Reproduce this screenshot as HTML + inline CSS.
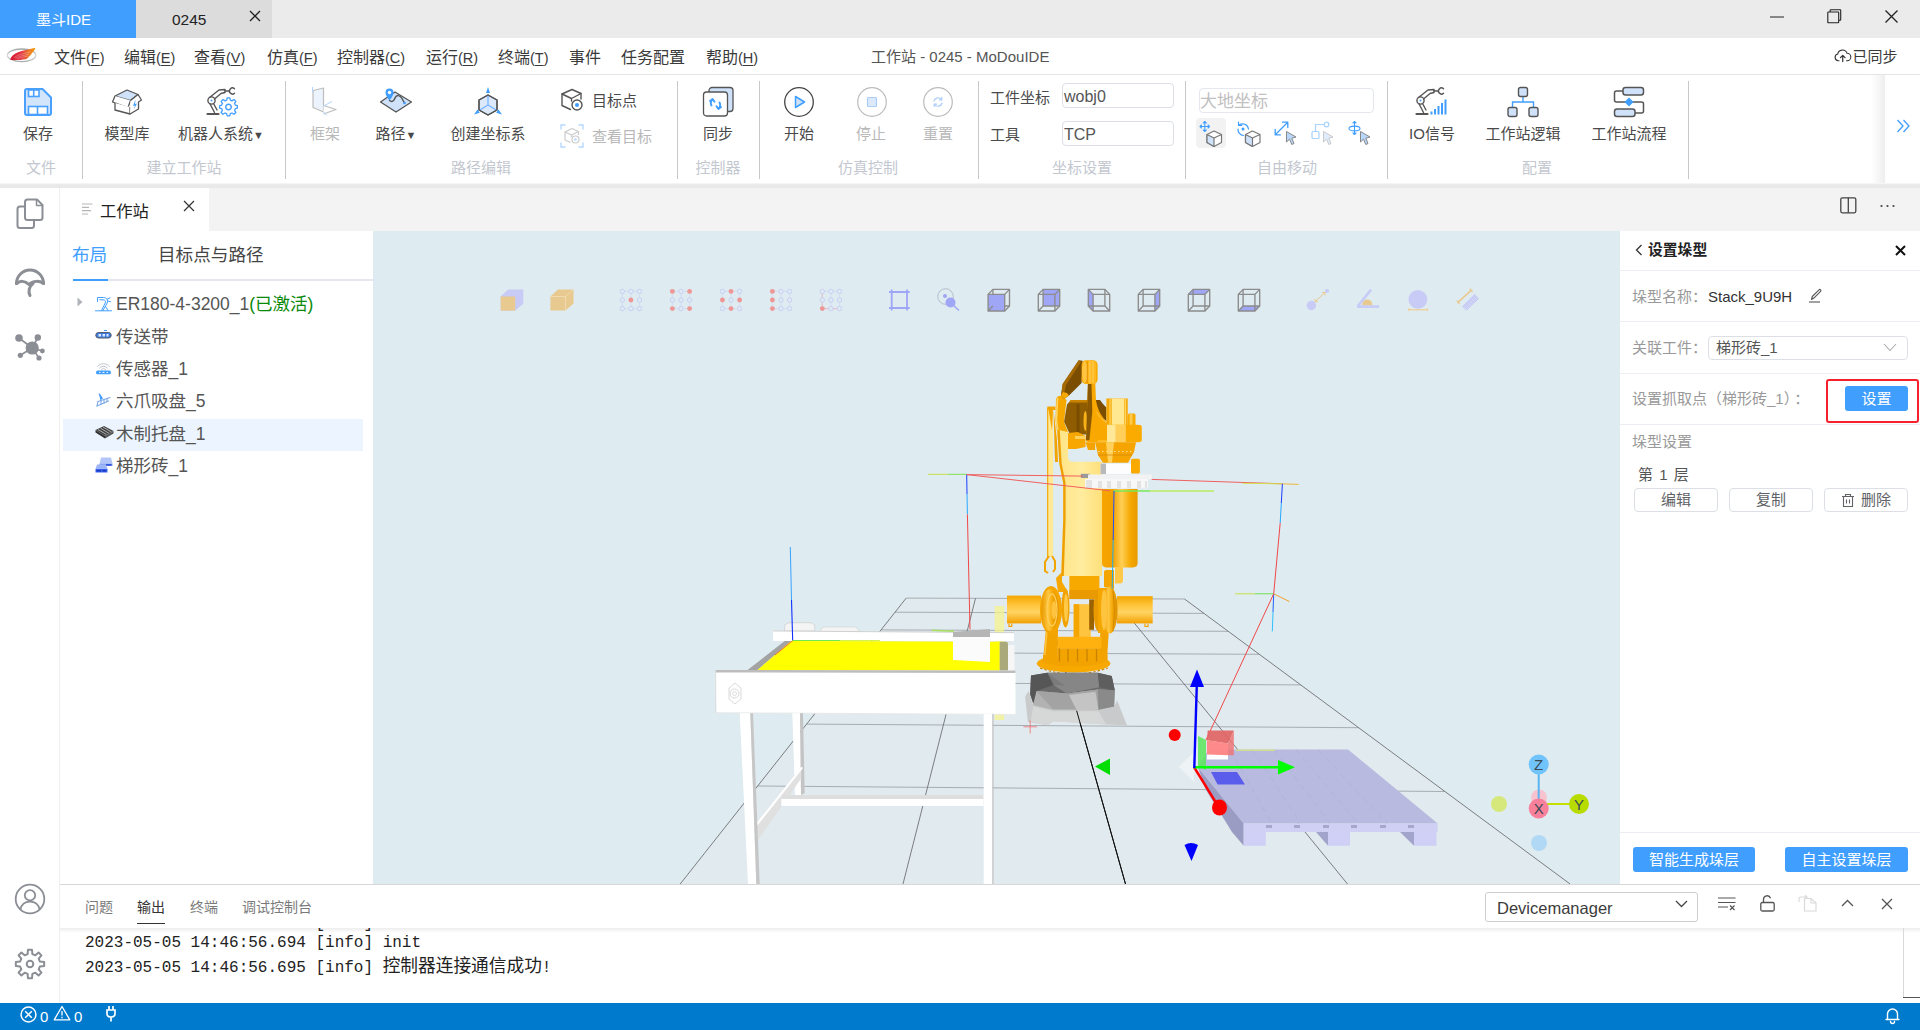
<!DOCTYPE html>
<html lang="zh-CN">
<head>
<meta charset="utf-8">
<title>工作站 - 0245 - MoDouIDE</title>
<style>
*{box-sizing:border-box;margin:0;padding:0}
html,body{width:1920px;height:1030px;overflow:hidden;background:#fff}
body{font-family:"Liberation Sans","Noto Sans CJK SC",sans-serif;color:#333;position:relative;font-size:15px}
.abs{position:absolute}
.t{position:absolute;white-space:nowrap;line-height:1}
svg{position:absolute;overflow:visible}
/* title bar */
#titlebar{position:absolute;left:0;top:0;width:1920px;height:38px;background:#ebebeb}
#tab1{position:absolute;left:0;top:0;width:136px;height:38px;background:#409eff}
#tab2{position:absolute;left:136px;top:0;width:136px;height:38px;background:#dcdcdc}
/* menubar */
#menubar{position:absolute;left:0;top:38px;width:1920px;height:37px;background:#fff;border-bottom:1px solid #e4e4e4}
.mi{position:absolute;top:11px;font-size:16px;color:#3a3a3a;white-space:nowrap;line-height:18px}
.mi i{font-style:normal;font-size:14.500px}
.mi u{text-decoration:underline;text-underline-offset:2px;text-decoration-thickness:1px}
/* ribbon */
#ribbon{position:absolute;left:0;top:75px;width:1920px;height:108px;background:#fff}
#ribbonshadow{position:absolute;left:0;top:183px;width:1920px;height:5px;background:linear-gradient(#fbfbfb 0,#ececec 1.200px,#e9e9e9 2px,#e9e9e9 100%)}
.sep{position:absolute;top:6px;width:1px;height:98px;background:#c8c8c8}
.rl{position:absolute;font-size:15px;color:#4a4a4a;margin-top:1px;white-space:nowrap;line-height:18px;transform:translateX(-50%)}
.rl.dis{color:#b8b8b8}
.gl{position:absolute;top:83.500px;font-size:15px;color:#c3c7cf;white-space:nowrap;line-height:18px;transform:translateX(-50%)}
</style>
</head>
<body>
<!-- TITLE BAR -->
<div id="titlebar">
  <div id="tab1"><span class="t" style="left:36px;top:12px;font-size:15px;color:#fff">墨斗IDE</span></div>
  <div id="tab2"><span class="t" style="left:36px;top:11.500px;font-size:15.500px;color:#222">0245</span>
    <svg style="left:113px;top:10px" width="12" height="12" viewBox="0 0 12 12"><path d="M1 1L11 11M11 1L1 11" stroke="#222" stroke-width="1.3" fill="none"/></svg>
  </div>
  <svg style="left:1770px;top:16px" width="14" height="2" viewBox="0 0 14 2"><path d="M0 1H14" stroke="#222" stroke-width="1"/></svg>
  <svg style="left:1827px;top:9px" width="14" height="14" viewBox="0 0 14 14"><path d="M3.200 3V1.300Q3.200 .8 3.700 .8H13.200Q13.700 .8 13.700 1.300V10.800Q13.700 11.300 13.200 11.300H11.700" stroke="#222" stroke-width="1.100" fill="none"/><rect x=".8" y="3" width="10.900" height="10.800" rx=".6" stroke="#222" stroke-width="1.100" fill="none"/></svg>
  <svg style="left:1885px;top:10px" width="13" height="13" viewBox="0 0 13 13"><path d="M.5 .5L12.5 12.5M12.5 .5L.5 12.5" stroke="#222" stroke-width="1.3" fill="none"/></svg>
</div>
<!-- MENU BAR -->
<div id="menubar">
  <svg style="left:0;top:0" width="60" height="37" viewBox="0 38 60 37">
    <defs><linearGradient id="lgw" x1="0" x2="1" y1="0" y2="0"><stop offset="0" stop-color="#d7172f"/><stop offset=".45" stop-color="#e23a45"/><stop offset=".75" stop-color="#ee7a2a"/><stop offset="1" stop-color="#f39a00"/></linearGradient>
    <linearGradient id="lgr" x1="0" x2="0" y1="0" y2="1"><stop offset="0" stop-color="#9fa5a5"/><stop offset=".5" stop-color="#d9dcdc"/><stop offset="1" stop-color="#a9adad"/></linearGradient></defs>
    <ellipse cx="21.600" cy="55.300" rx="14.200" ry="6.300" fill="none" stroke="url(#lgr)" stroke-width="1.300"/>
    <path d="M10.100 59.800C11 56.500 13.500 54 18 52.300C24 50 30 49.500 35.400 47.800C34.500 50.500 33 52.500 31.400 53.200L32.200 52.600C31 55 29.500 56.500 28 57.200L28.800 57C27.500 58.500 26.500 59 25.800 59.200C20 60 14 60.500 10.100 59.800Z" fill="url(#lgw)"/>
    <path d="M14 57.500C19 54.500 24 53.200 30.500 52M15.500 58.300C20 56 24.500 55 29 54.300M17 59C21 57.300 24 56.700 27.500 56.300" stroke="#fff" stroke-width=".45" fill="none" opacity=".55"/>
  </svg>
  <span class="mi" style="left:54px">文件<i>(<u>F</u>)</i></span>
  <span class="mi" style="left:124px">编辑<i>(<u>E</u>)</i></span>
  <span class="mi" style="left:194px">查看<i>(<u>V</u>)</i></span>
  <span class="mi" style="left:267px">仿真<i>(<u>F</u>)</i></span>
  <span class="mi" style="left:337px">控制器<i>(<u>C</u>)</i></span>
  <span class="mi" style="left:426px">运行<i>(<u>R</u>)</i></span>
  <span class="mi" style="left:498px">终端<i>(<u>T</u>)</i></span>
  <span class="mi" style="left:569px">事件</span>
  <span class="mi" style="left:621px">任务配置</span>
  <span class="mi" style="left:706px">帮助<i>(<u>H</u>)</i></span>
  <span class="mi" style="left:871px;top:10px;font-size:15px;color:#555">工作站 - 0245 - MoDouIDE</span>
  <svg style="left:1833.500px;top:11px" width="17.500" height="14" viewBox="0 0 18 15"><path d="M5 12.5H4.2A3.6 3.6 0 0 1 3.6 5.4A5.2 5.2 0 0 1 13.6 4.6A3.9 3.9 0 0 1 13.8 12.5H13" stroke="#333" stroke-width="1.150" fill="none" stroke-linecap="round"/><path d="M9 13.5V7M6.5 9.3L9 6.8L11.5 9.3" stroke="#333" stroke-width="1.3" fill="none" stroke-linecap="round" stroke-linejoin="round"/></svg>
  <span class="mi" style="left:1852.500px;top:10px;font-size:15px">已同步</span>
</div>
<!-- RIBBON -->
<div id="ribbon">
  <div class="sep" style="left:82px"></div>
  <div class="sep" style="left:285px"></div>
  <div class="sep" style="left:677px"></div>
  <div class="sep" style="left:759px"></div>
  <div class="sep" style="left:978px"></div>
  <div class="sep" style="left:1185px"></div>
  <div class="sep" style="left:1387px"></div>
  <div class="sep" style="left:1688px"></div>

  <!-- save -->
  <svg style="left:24px;top:13px" width="28" height="28" viewBox="0 0 28 28">
    <path d="M3 1H18.5L27 9.5V25Q27 27 25 27H3Q1 27 1 25V3Q1 1 3 1Z" fill="#d3e5fb" stroke="#4aa0ff" stroke-width="2" stroke-linejoin="round"/>
    <rect x="4.5" y="2" width="10.5" height="6.5" fill="#fff" stroke="#4aa0ff" stroke-width="1.6"/>
    <path d="M9.7 2V8.5" stroke="#4aa0ff" stroke-width="1.6"/>
    <rect x="4.5" y="18.5" width="19" height="8" fill="#fff" stroke="#4aa0ff" stroke-width="1.6"/>
    <path d="M13.5 18.5V26.5" stroke="#4aa0ff" stroke-width="1.6"/>
  </svg>
  <span class="rl" style="left:38px;top:49px">保存</span>
  <span class="gl" style="left:41px">文件</span>

  <!-- model lib -->
  <svg style="left:111px;top:13px" width="32" height="28" viewBox="0 0 32 28">
    <path d="M4 8L16 2L27 6.5L19.5 12.5Z" fill="#cfe2fa" stroke="#555" stroke-width="1.3" stroke-linejoin="round"/>
    <path d="M4 8L1.5 14L17 19.5L19.5 12.5" fill="#fff" stroke="#555" stroke-width="1.3" stroke-linejoin="round"/>
    <path d="M4 15V22L19 26V19" fill="#fff" stroke="#555" stroke-width="1.3" stroke-linejoin="round"/>
    <path d="M19.5 12.5L27 6.5L30.5 12L27.5 14V21L19 26" fill="#fff" stroke="#555" stroke-width="1.3" stroke-linejoin="round"/>
    <path d="M24.5 11.5L22 18L24 17.5L22.8 21.5L26 15.5L24 16Z" fill="#409eff"/>
  </svg>
  <span class="rl" style="left:127px;top:49px">模型库</span>

  <!-- robot system -->
  <svg style="left:205px;top:12px" width="34" height="30" viewBox="0 0 34 30">
    <g fill="none" stroke="#555" stroke-width="1.4" stroke-linecap="round" stroke-linejoin="round">
      <circle cx="6.5" cy="13.5" r="3.6"/>
      <path d="M4.5 10.5L14 3L20 2.5V5.5L16 6.5L9.5 12"/>
      <path d="M20 4H23.5"/>
      <path d="M29.5 1.8A3 3 0 1 0 29.5 6.2"/>
      <path d="M5 16.8L9.5 25.5M8.5 16.5L12 23"/>
    </g>
    <path d="M2.5 27H13.5" stroke="#555" stroke-width="2.2" stroke-linecap="round"/>
    <circle cx="6.5" cy="13.5" r="1" fill="#409eff"/>
    <g transform="translate(23.5,20)" fill="none" stroke="#409eff" stroke-width="1.4" stroke-linejoin="round">
      <path d="M-1.4 -8.6H1.4L2 -6.2L3.8 -5.4L6 -6.8L8 -4.8L6.6 -2.6L7.4 -.8L9.6 -.2V2.6L7.4 3.2L6.6 5L8 7.2L6 9.2L3.8 7.8L2 8.6L1.4 11H-1.4L-2 8.6L-3.8 7.8L-6 9.2L-8 7.2L-6.6 5L-7.4 3.2L-9.6 2.6V-.2L-7.4 -.8L-6.6 -2.6L-8 -4.8L-6 -6.8L-3.8 -5.4L-2 -6.2Z" transform="translate(0,-1.2) scale(.92)"/>
      <circle cx="0" cy="0" r="2.8"/>
    </g>
  </svg>
  <span class="rl" style="left:221px;top:49px">机器人系统<span style="font-size:11px">▼</span></span>
  <span class="gl" style="left:184px">建立工作站</span>

  <!-- frame (disabled) -->
  <svg style="left:310px;top:11px" width="32" height="32" viewBox="0 0 32 32" opacity=".55">
    <path d="M3 4.5L13.5 2V26L3 21.5Z" fill="#dfeafa" stroke="#888" stroke-width="1.2" stroke-linejoin="round"/>
    <path d="M13.5 19.5L26 23.5L13.5 28" fill="#fff" stroke="#888" stroke-width="1.2" stroke-linejoin="round"/>
    <path d="M2.5 1V6M13.5 20L22 15.5M13.5 26L17 29.5" stroke="#6fb1ff" stroke-width="1" fill="none"/>
  </svg>
  <span class="rl dis" style="left:325px;top:49px">框架</span>

  <!-- path -->
  <svg style="left:379px;top:11px" width="34" height="28" viewBox="0 0 34 28">
    <path d="M1.5 16L16 6L32.5 16L17 26Z" fill="#cfe2fa" stroke="#555" stroke-width="1.3" stroke-linejoin="round"/>
    <path d="M10.5 14.5C13 16.5 15 15 16 12C17.5 8.5 21 9 23 12.5L25.5 17" fill="none" stroke="#555" stroke-width="1.5" stroke-linecap="round"/>
    <circle cx="25.5" cy="17" r="1.3" fill="#409eff"/>
    <path d="M10.5 14.5C8 11 6.5 9 6.5 6.5A4 4 0 0 1 14.5 6.5C14.5 9 13 11 10.5 14.5Z" fill="#409eff"/>
    <circle cx="10.5" cy="6.5" r="1.7" fill="#fff"/>
  </svg>
  <span class="rl" style="left:396px;top:49px">路径<span style="font-size:11px">▼</span></span>

  <!-- create coord -->
  <svg style="left:473px;top:11px" width="30" height="32" viewBox="0 0 30 32">
    <path d="M15 9L24 14V24L15 29L6 24V14Z" fill="#dce9fb" stroke="#555" stroke-width="1.3" stroke-linejoin="round"/>
    <path d="M15 9V19L6 24.5M15 19L24 24.5" fill="none" stroke="#6fb1ff" stroke-width="1.2"/>
    <path d="M15 9V29" stroke="#6fb1ff" stroke-width="0" />
    <path d="M15 1L17 7H13Z M1 28.5L4.5 23.5L6.8 26.8Z M29 28.5L25.5 23.5L23.2 26.8Z" fill="#409eff"/>
    <path d="M15 9L24 14V24L15 29L6 24V14Z" fill="none" stroke="#555" stroke-width="1.3" stroke-linejoin="round"/>
  </svg>
  <span class="rl" style="left:488px;top:49px">创建坐标系</span>

  <!-- target point -->
  <svg style="left:560px;top:13px" width="24" height="24" viewBox="0 0 24 24">
    <g fill="none" stroke="#555" stroke-width="1.4" stroke-linejoin="round" stroke-linecap="round">
      <path d="M12 1.5L21 5.5V11M12 1.5L2 6V17.5L10.5 21.5"/>
      <path d="M2 6L11.5 10.5L21 5.5M11.5 10.5V13"/>
      <circle cx="17" cy="17" r="5"/>
    </g>
    <circle cx="17" cy="17" r="2" fill="#409eff"/>
  </svg>
  <span class="rl" style="left:592px;top:16px;transform:none">目标点</span>
  <!-- view target (disabled) -->
  <svg style="left:560px;top:49px" width="24" height="24" viewBox="0 0 24 24" opacity=".5">
    <path d="M1 5.5V1H5.5M18.5 1H23V5.5M23 18.5V23H18.5M5.5 23H1V18.5" fill="none" stroke="#6fb1ff" stroke-width="1.4"/>
    <g fill="none" stroke="#999" stroke-width="1.2" stroke-linejoin="round">
      <path d="M12 4.5L18.5 7.5V11M12 4.5L5 8V16L10.5 18.5"/>
      <path d="M5 8L11.5 11L18.5 7.5M11.5 11V13"/>
      <circle cx="15.5" cy="15.5" r="3.5"/>
    </g>
    <circle cx="15.5" cy="15.5" r="1.3" fill="#6fb1ff"/>
  </svg>
  <span class="rl dis" style="left:592px;top:52px;transform:none">查看目标</span>
  <span class="gl" style="left:481px">路径编辑</span>

  <!-- sync -->
  <svg style="left:702px;top:11px" width="32" height="32" viewBox="0 0 32 32">
    <rect x="7" y="1.5" width="24" height="24" rx="3" fill="#cfe2fa" stroke="#555" stroke-width="1.3"/>
    <rect x="1.5" y="6" width="24" height="24" rx="3" fill="#fff" stroke="#555" stroke-width="1.3"/>
    <g fill="none" stroke="#409eff" stroke-width="1.9" stroke-linecap="round" stroke-linejoin="round">
      <path d="M9.5 19.5A5 5 0 0 1 10.5 13.5M8 15L10.6 13L12.5 15.8"/>
      <path d="M17.5 16.5A5 5 0 0 1 16.5 22.5M19 21L16.4 23L14.5 20.2"/>
      <path d="M13 12.5A4.5 4.5 0 0 1 17 15M11 23.5A4.5 4.5 0 0 0 14.5 23.5" stroke-width="0"/>
    </g>
  </svg>
  <span class="rl" style="left:718px;top:49px">同步</span>
  <span class="gl" style="left:718px">控制器</span>

  <!-- start -->
  <svg style="left:783px;top:11px" width="32" height="32" viewBox="0 0 32 32">
    <circle cx="16" cy="16" r="14.3" fill="#fff" stroke="#444" stroke-width="1.3"/>
    <path d="M12.5 10.5L21.5 16L12.5 21.5Z" fill="#cfe2fa" stroke="#409eff" stroke-width="1.5" stroke-linejoin="round"/>
  </svg>
  <span class="rl" style="left:799px;top:49px">开始</span>
  <!-- stop -->
  <svg style="left:856px;top:11px" width="32" height="32" viewBox="0 0 32 32">
    <circle cx="16" cy="16" r="14.3" fill="#fff" stroke="#bbb" stroke-width="1.2"/>
    <rect x="11.5" y="11.5" width="9" height="9" rx="1" fill="#dce9fb" stroke="#a9cdf9" stroke-width="1.2"/>
  </svg>
  <span class="rl dis" style="left:871px;top:49px">停止</span>
  <!-- reset -->
  <svg style="left:922px;top:11px" width="32" height="32" viewBox="0 0 32 32">
    <circle cx="16" cy="16" r="14.3" fill="#fff" stroke="#bbb" stroke-width="1.2"/>
    <g fill="none" stroke="#a9cdf9" stroke-width="1.2" stroke-linecap="round" stroke-linejoin="round">
      <path d="M12 15A4.2 4.2 0 0 1 19.5 13.5M20 17A4.2 4.2 0 0 1 12.5 18.5"/>
      <path d="M19.8 11.5V13.8H17.5M12.2 20.5V18.2H14.5"/>
    </g>
  </svg>
  <span class="rl dis" style="left:938px;top:49px">重置</span>
  <span class="gl" style="left:868px">仿真控制</span>

  <!-- coord settings -->
  <span class="rl" style="left:990px;top:13px;transform:none">工件坐标</span>
  <div class="abs" style="left:1062px;top:8px;width:112px;height:25px;border:1px solid #dcdfe6;border-radius:4px;background:#fff"></div>
  <span class="t" style="left:1064px;top:14px;font-size:16px;color:#555">wobj0</span>
  <span class="rl" style="left:990px;top:50px;transform:none">工具</span>
  <div class="abs" style="left:1062px;top:46px;width:112px;height:25px;border:1px solid #dcdfe6;border-radius:4px;background:#fff"></div>
  <span class="t" style="left:1064px;top:51.500px;font-size:16px;color:#555">TCP</span>
  <span class="gl" style="left:1082px">坐标设置</span>

  <!-- free move -->
  <div class="abs" style="left:1199px;top:12.500px;width:175px;height:25px;border:1px solid #e4e7ed;border-radius:4px;background:#fff"></div>
  <span class="t" style="left:1200px;top:18px;font-size:17px;color:#c0c0c0">大地坐标</span>
  <div class="abs" style="left:1196px;top:43px;width:30px;height:30px;border-radius:4px;background:#f2f2f2"></div>
  <!-- fm1 -->
  <svg style="left:1198px;top:45px" width="28" height="28" viewBox="0 0 28 28">
    <g fill="none" stroke="#409eff" stroke-width="1.1" stroke-linecap="round" stroke-linejoin="round">
      <path d="M2 6.5H11.5M6.8 1.5V11.5M5.3 3L6.8 1.5L8.3 3M5.3 10L6.8 11.5L8.3 10M3.5 5L2 6.5L3.5 8M10 5L11.5 6.5L10 8"/>
    </g>
    <path d="M9 14.5L16 11L23.5 14.5V22.5L16 26.5L9 22.5Z" fill="#fff" stroke="#777" stroke-width="1.2" stroke-linejoin="round"/>
    <path d="M9 14.5L16 18V26.5L9 22.5Z" fill="#cfe2fa" stroke="#777" stroke-width="1.2" stroke-linejoin="round"/>
    <path d="M16 18L23.5 14.5" stroke="#777" stroke-width="1.2"/>
  </svg>
  <!-- fm2 -->
  <svg style="left:1235px;top:45px" width="30" height="28" viewBox="0 0 30 28">
    <path d="M10.5 14.5L17.5 11L25 14.5V22.5L17.5 26.5L10.5 22.5Z" fill="#fff" stroke="#777" stroke-width="1.2" stroke-linejoin="round"/>
    <path d="M10.5 14.5L17.5 18V26.5L10.5 22.5Z" fill="#cfe2fa" stroke="#777" stroke-width="1.2" stroke-linejoin="round"/>
    <path d="M17.5 18L25 14.5" stroke="#777" stroke-width="1.2"/>
    <g fill="none" stroke="#409eff" stroke-width="1.2" stroke-linecap="round" stroke-linejoin="round">
      <path d="M4 5A6 6 0 0 1 13.5 9M8.5 15.5A6 6 0 0 1 3 9"/>
      <path d="M3.5 2V5.3H6.8"/>
    </g>
    <circle cx="8" cy="9" r="1.5" fill="#409eff"/>
  </svg>
  <!-- fm3 -->
  <svg style="left:1273px;top:45px" width="28" height="28" viewBox="0 0 28 28">
    <g fill="none" stroke="#409eff" stroke-width="1.3" stroke-linecap="round" stroke-linejoin="round">
      <path d="M2.5 14.5L14.5 2.5M9.5 2.2H14.8V7.5M2.2 9.5V14.8H7.5"/>
    </g>
    <path d="M13.5 11.5L23 17L18.8 18.2L21 23.5L18.8 24.5L16.5 19.2L13.5 22Z" fill="#b9d6fb" stroke="#888" stroke-width="1" stroke-linejoin="round"/>
  </svg>
  <!-- fm4 (disabled) -->
  <svg style="left:1310px;top:45px" width="28" height="28" viewBox="0 0 28 28" opacity=".45">
    <g fill="none" stroke="#409eff" stroke-width="1.2" stroke-linejoin="round">
      <rect x="2" y="11.5" width="7" height="7" rx="1"/>
      <circle cx="16.5" cy="4.5" r="2.3"/>
      <path d="M5.5 11.5V4.5H14"/>
    </g>
    <path d="M13.5 11.5L23 17L18.8 18.2L21 23.5L18.8 24.5L16.5 19.2L13.5 22Z" fill="#b9d6fb" stroke="#888" stroke-width="1" stroke-linejoin="round"/>
  </svg>
  <!-- fm5 -->
  <svg style="left:1347px;top:45px" width="28" height="28" viewBox="0 0 28 28">
    <g fill="none" stroke="#409eff" stroke-width="1.1" stroke-linecap="round" stroke-linejoin="round">
      <ellipse cx="7.5" cy="8.5" rx="5.5" ry="2.4"/>
      <path d="M7.5 1.5V14.5M6 3L7.5 1.5L9 3M6 13L7.5 14.5L9 13"/>
    </g>
    <path d="M13.5 11.5L23 17L18.8 18.2L21 23.5L18.8 24.5L16.5 19.2L13.5 22Z" fill="#b9d6fb" stroke="#888" stroke-width="1" stroke-linejoin="round"/>
  </svg>
  <span class="gl" style="left:1287px">自由移动</span>

  <!-- IO signal -->
  <svg style="left:1414px;top:12px" width="36" height="30" viewBox="0 0 36 30">
    <g fill="none" stroke="#555" stroke-width="1.4" stroke-linecap="round" stroke-linejoin="round">
      <circle cx="6.5" cy="13.5" r="3.6"/>
      <path d="M4.5 10.5L14 3L20 2.5V5.5L16 6.5L9.5 12"/>
      <path d="M20 4H23.5"/>
      <path d="M29.5 1.8A3 3 0 1 0 29.5 6.2"/>
      <path d="M5 16.8L9.5 25.5M8.5 16.5L12 23"/>
    </g>
    <path d="M2.5 27H13.5" stroke="#555" stroke-width="2.2" stroke-linecap="round"/>
    <circle cx="6.5" cy="13.5" r="1" fill="#409eff"/>
    <path d="M17.5 27.5V24.5M21 27.5V22M24.5 27.5V19M28 27.5V16M31.5 27.5V12.5" stroke="#409eff" stroke-width="2" stroke-linecap="butt"/>
  </svg>
  <span class="rl" style="left:1432px;top:49px">IO信号</span>
  <!-- station logic -->
  <svg style="left:1507px;top:11px" width="32" height="32" viewBox="0 0 32 32">
    <path d="M16 10V16M5.5 21.5V16H26.5V21.5" fill="none" stroke="#409eff" stroke-width="1.4"/>
    <g fill="#cfe2fa" stroke="#555" stroke-width="1.4">
      <rect x="11.5" y="1.5" width="9" height="9" rx="2"/>
      <rect x="1" y="21.5" width="9" height="9" rx="2"/>
      <rect x="22" y="21.5" width="9" height="9" rx="2"/>
    </g>
  </svg>
  <span class="rl" style="left:1523px;top:49px">工作站逻辑</span>
  <!-- station flow -->
  <svg style="left:1613px;top:11px" width="32" height="32" viewBox="0 0 32 32">
    <path d="M10 5H3.5Q1.5 5 1.5 7V14Q1.5 16 3.5 16H28.500Q30.5 16 30.5 18V25Q30.5 27 28.500 27H22" fill="none" stroke="#555" stroke-width="1.5"/>
    <g fill="#cfe2fa" stroke="#555" stroke-width="1.5">
      <rect x="10" y="1.500" width="20.5" height="7.5" rx="2.5"/>
      <rect x="1.500" y="23" width="20.5" height="7.5" rx="2.5"/>
    </g>
    <path d="M16 11.5L20.5 16L16 20.5L11.5 16Z" fill="#409eff"/>
  </svg>
  <span class="rl" style="left:1629px;top:49px">工作站流程</span>
  <span class="gl" style="left:1537px">配置</span>

  <div class="abs" style="left:1871px;top:0;width:14px;height:108px;background:linear-gradient(90deg,rgba(0,0,0,0),rgba(0,0,0,.065))"></div>
  <svg style="left:1896px;top:44px" width="14" height="14" viewBox="0 0 14 14"><path d="M1.5 1L7 7L1.500 13M7.5 1L13 7L7.5 13" fill="none" stroke="#409eff" stroke-width="1.3"/></svg>
</div>
<div id="ribbonshadow"></div>
<!-- MAIN AREA BG / TABBAR -->
<div class="abs" style="left:0;top:188px;width:1920px;height:43px;background:#f3f3f3"></div>
<!-- activity bar -->
<div class="abs" style="left:0;top:188px;width:60px;height:815px;background:#fff;border-right:1px solid #efefef"></div>
<svg style="left:16px;top:198px" width="28" height="32" viewBox="0 0 28 32">
  <g fill="none" stroke="#8b8e94" stroke-width="2" stroke-linejoin="round" stroke-linecap="round">
    <path d="M9 8.500H4Q1.500 8.500 1.500 11V27.500Q1.500 30 4 30H15.500Q18 30 18 27.500V22.500"/>
    <path d="M11.500 1.500H21L26.500 7V19.500Q26.500 22 24 22H11.500Q9 22 9 19.500V4Q9 1.500 11.500 1.500Z"/>
    <path d="M20.500 1.800V7.500H26.200" stroke-width="1.500"/>
  </g>
</svg>
<svg style="left:14px;top:267px" width="32" height="32" viewBox="0 0 32 32">
  <g fill="none" stroke="#8b8e94" stroke-width="3" stroke-linecap="round" stroke-linejoin="round">
    <path d="M2.500 16.500A13.500 13.500 0 0 1 29.500 16.500"/>
    <path d="M2.500 16.500C6 13.500 11 13.500 15 17.500C19 13.500 25.500 13.500 29.500 16.500"/>
    <path d="M19 16.500C15 19.500 14 24.500 16 28.500"/>
  </g>
</svg>
<svg style="left:14px;top:334px" width="32" height="28" viewBox="0 0 32 28">
  <g stroke="#8b8e94" stroke-width="1.600" fill="none">
    <path d="M18.200 14L5 4M18.200 14L23.800 3.500M18.200 14L28.400 17M18.200 14L25 24M18.200 14L6.300 21.300"/>
  </g>
  <g fill="#8b8e94">
    <circle cx="18.200" cy="14" r="6.600"/><circle cx="5" cy="4" r="3.800"/><circle cx="23.800" cy="3.500" r="3.200"/>
    <circle cx="28.400" cy="17" r="2.400"/><circle cx="25" cy="24" r="2.600"/><circle cx="6.300" cy="21.300" r="2.600"/>
  </g>
</svg>
<!-- account -->
<svg style="left:14px;top:883px" width="32" height="32" viewBox="0 0 32 32">
  <g fill="none" stroke="#8b8e94" stroke-width="1.800">
    <circle cx="16" cy="16" r="14.300"/>
    <circle cx="16" cy="12.300" r="5.200"/>
    <path d="M6.500 26.500C7.500 21 11 18.600 16 18.600C21 18.600 24.500 21 25.500 26.500"/>
  </g>
</svg>
<!-- gear -->
<svg style="left:14px;top:948px" width="32" height="32" viewBox="0 0 32 32">
  <g fill="none" stroke="#8b8e94" stroke-width="2" stroke-linejoin="round">
    <path d="M13.62 6.08L13.99 1.84L18.01 1.84L18.38 6.08L21.33 7.30L24.59 4.56L27.44 7.41L24.70 10.67L25.92 13.62L30.16 13.99L30.16 18.01L25.92 18.38L24.70 21.33L27.44 24.59L24.59 27.44L21.33 24.70L18.38 25.92L18.01 30.16L13.99 30.16L13.62 25.92L10.67 24.70L7.41 27.44L4.56 24.59L7.30 21.33L6.08 18.38L1.84 18.01L1.84 13.99L6.08 13.62L7.30 10.67L4.56 7.41L7.41 4.56L10.67 7.30Z"/>
    <circle cx="16" cy="16" r="3.300"/>
  </g>
</svg>

<!-- sidebar -->
<div class="abs" style="left:60px;top:188px;width:149px;height:43px;background:#fff"></div>
<div class="abs" style="left:60px;top:231px;width:313px;height:654px;background:#fff"></div>
<svg style="left:82px;top:203px" width="11" height="12" viewBox="0 0 11 12"><path d="M0 1H10.500M0 4.300H7M0 7.600H9M0 11H6" stroke="#b5b5b5" stroke-width="1.200"/></svg>
<span class="t" style="left:100px;top:202.500px;font-size:16.300px;color:#222">工作站</span>
<svg style="left:183px;top:200px" width="12" height="12" viewBox="0 0 12 12"><path d="M1 1L11 11M11 1L1 11" stroke="#333" stroke-width="1.200" fill="none"/></svg>

<span class="t" style="left:72px;top:247px;font-size:17.600px;color:#409eff">布局</span>
<span class="t" style="left:158px;top:247px;font-size:17.600px;color:#444">目标点与路径</span>
<div class="abs" style="left:73px;top:279px;width:300px;height:2px;background:#e4e7ed"></div>
<div class="abs" style="left:73px;top:279px;width:35px;height:2px;background:#409eff"></div>

<style>
.tr{position:absolute;left:116px;margin-top:1px;font-size:17.500px;color:#555;white-space:nowrap;line-height:20px}
.ti{position:absolute;left:95px}
</style>
<div class="abs" style="left:63px;top:419px;width:300px;height:32px;background:#ecf5ff"></div>
<svg style="left:77px;top:297px" width="6" height="10" viewBox="0 0 6 10"><path d="M.5 .5L5.500 5L.5 9.500Z" fill="#b0b3b9"/></svg>
<!-- robot icon -->
<svg class="ti" style="top:295px" width="18" height="17" viewBox="0 0 18 17">
  <g fill="none" stroke="#409eff" stroke-width="1" stroke-linecap="round" stroke-linejoin="round">
    <path d="M2.500 6.500V2.500H8.500C11.500 2.500 13.200 4.800 12.200 8L8 15.500"/>
    <path d="M4.800 4.800H8C10.200 4.800 11 6.200 10.200 8L6.500 15.500"/>
    <path d="M12.500 4L15 2.800M12.800 6L15.500 6.800"/>
    <path d="M10.500 11.500L13 15.500"/>
    <path d="M.5 15.800H16.500"/>
  </g>
</svg>
<span class="tr" style="top:293px">ER180-4-3200_1<span style="color:#0a8a0a">(已激活)</span></span>
<!-- conveyor icon -->
<svg class="ti" style="top:329px" width="17" height="12" viewBox="0 0 17 12">
  <rect x=".8" y="3.500" width="15.400" height="5.500" rx="2.700" fill="#3d7be0" stroke="#555b66" stroke-width="1"/>
  <rect x="3.500" y="5" width="2.500" height="2.500" fill="#dbe8ff"/><rect x="7.500" y="5" width="2.500" height="2.500" fill="#dbe8ff"/><rect x="11.500" y="5" width="2" height="2.500" fill="#dbe8ff"/>
  <path d="M9 1.500H12" stroke="#409eff" stroke-width="1"/>
</svg>
<span class="tr" style="top:326px">传送带</span>
<!-- sensor icon -->
<svg class="ti" style="top:360px" width="17" height="15" viewBox="0 0 17 15">
  <g fill="none" stroke="#bfc4cc" stroke-width="1" stroke-linecap="round">
    <path d="M2.500 6.500A7.500 7.500 0 0 1 14.500 6.500"/><path d="M4.500 8A5.200 5.200 0 0 1 12.500 8"/><path d="M6.500 9.300A2.800 2.800 0 0 1 10.500 9.300"/>
  </g>
  <rect x="1" y="10.500" width="15" height="3.800" rx="1.900" fill="#409eff"/>
  <path d="M4 12.400H5.500M7.500 12.400H9.500M11.500 12.400H13" stroke="#fff" stroke-width="1"/>
</svg>
<span class="tr" style="top:358px">传感器_1</span>
<!-- gripper icon -->
<svg class="ti" style="top:392px" width="17" height="16" viewBox="0 0 17 16">
  <g fill="none" stroke="#7aa7e6" stroke-width="1.100" stroke-linecap="round">
    <path d="M4 2L6.500 7"/><path d="M3 9.500L15 5.500"/><path d="M2 14L13.500 9"/><path d="M3 9.500L2 14M6 8.500V12.500M9 7.500V11M12 6.500V9.500"/>
  </g>
  <path d="M4.500 1L8 6.500L5 8Z" fill="#409eff"/>
</svg>
<span class="tr" style="top:390px">六爪吸盘_5</span>
<!-- pallet icon -->
<svg class="ti" style="top:425px" width="19" height="15" viewBox="0 0 19 15">
  <path d="M.5 5L9 1L18.500 6L10 11Z" fill="#444"/>
  <path d="M.5 5V7.500L10 13.500V11Z" fill="#333"/><path d="M10 11V13.500L18.500 8.500V6Z" fill="#555"/>
  <path d="M3 4.500L11.500 9.500M5.500 3.200L14 8.300M8 2L16.500 7" stroke="#ddd" stroke-width=".7"/>
</svg>
<span class="tr" style="top:423px">木制托盘_1</span>
<!-- brick icon -->
<svg class="ti" style="top:457px" width="18" height="16" viewBox="0 0 18 16">
  <path d="M6 .5H16L17.500 6.500H4.500Z" fill="#b4c6f8"/>
  <path d="M4.500 6.500H17.500V9H4.500Z" fill="#7d9cf0"/>
  <path d="M11 7.200H16.500V8.600H11Z" fill="#1f45d8"/>
  <path d="M2 7.500H11L12.500 12H.5Z" fill="#9db4f6"/>
  <path d="M.5 12H12.500V15.500H.5Z" fill="#3a62ea"/>
  <path d="M1.500 13H6V14.500H1.500ZM7.500 13H11V14.500H7.500Z" fill="#1838c4"/>
</svg>
<span class="tr" style="top:455px">梯形砖_1</span>
<!-- VIEWPORT -->
<div class="abs" style="left:373px;top:231px;width:1247px;height:653px;background:#deebf0;overflow:hidden">
<svg style="left:0;top:0" width="1247" height="653" viewBox="373 231 1247 653">
<defs>
<linearGradient id="gcyl" x1="0" x2="1" y1="0" y2="0"><stop offset="0" stop-color="#f7a600"/><stop offset=".3" stop-color="#f2a000"/><stop offset=".55" stop-color="#ffcf55"/><stop offset=".8" stop-color="#f5a800"/><stop offset="1" stop-color="#e69a00"/></linearGradient>
<linearGradient id="gcol" x1="0" x2="1" y1="0" y2="0"><stop offset="0" stop-color="#f5a400"/><stop offset=".08" stop-color="#f5a400"/><stop offset=".1" stop-color="#ffe48a"/><stop offset=".6" stop-color="#ffec9e"/><stop offset="1" stop-color="#ffe07c"/></linearGradient>
<linearGradient id="ghc" x1="0" x2="0" y1="0" y2="1"><stop offset="0" stop-color="#f5a500"/><stop offset=".35" stop-color="#ffc63d"/><stop offset=".6" stop-color="#ffd362"/><stop offset="1" stop-color="#f2a000"/></linearGradient>
<linearGradient id="gring" x1="0" x2="1" y1="0" y2="0"><stop offset="0" stop-color="#e89a00"/><stop offset=".4" stop-color="#ffc640"/><stop offset=".7" stop-color="#f2a200"/><stop offset="1" stop-color="#d98e00"/></linearGradient>
<linearGradient id="gblue" x1="0" x2="0" y1="0" y2="1"><stop offset="0" stop-color="#55bfff"/><stop offset="1" stop-color="#0022ff"/></linearGradient>
<linearGradient id="gcol2" x1="0" x2="1" y1="0" y2="0"><stop offset="0" stop-color="#ffe486"/><stop offset=".55" stop-color="#ffec9e"/><stop offset="1" stop-color="#ffe07a"/></linearGradient>
</defs>
<polygon points="906.2,598.1 1184.5,599.0 1570.1,884 680.2,884" fill="#e1eaee"/>
<g stroke="#6e7275" stroke-width=".9" fill="none">
<path d="M906.2 598.1L1184.5 599.0" stroke="#979da3" stroke-width=".8"/>
<path d="M895.0 612.2L1204.0 613.4" stroke="#979da3" stroke-width=".8"/>
<path d="M881.0 629.9L1228.3 631.3" stroke="#979da3" stroke-width=".8"/>
<path d="M863.2 652.4L1259.3 654.3" stroke="#979da3" stroke-width=".8"/>
<path d="M839.5 682.5L1300.8 684.9" stroke="#979da3" stroke-width=".8"/>
<path d="M806.6 724.1L1358.6 727.7" stroke="#979da3" stroke-width=".8"/>
<path d="M757.7 786.0L1444.9 791.5" stroke="#979da3" stroke-width=".8"/>
<path d="M906.2 598.1L680.2 884"/>
<path d="M975.5 598.3L903.0 884"/>
<path d="M1114.5 598.8L1347.5 884"/>
<path d="M1184.5 599.0L1570.1 884"/>
</g>
<path d="M1045.0 598.5L1125.5 884" stroke="#111" stroke-width="1"/>
<!-- thin path lines behind -->
<g fill="none" stroke-width="1">
  <path d="M928 474.300H948" stroke="#c8e048"/><path d="M948 474.300H966.700" stroke="#80e050"/>
  <path d="M966.700 474.600L967 494" stroke="#1a3cff"/><path d="M967 494L967.400 514.400" stroke="#28a8ff"/>
  <path d="M967.400 514.400L970 629.200" stroke="#f04848"/>
  <path d="M1151.600 479.400L1282.400 483.800" stroke="#f06060"/>
  <path d="M1242.400 483.300L1282.400 483.800" stroke="#d0e050"/><path d="M1282.400 483.800L1298.600 484.400" stroke="#f0b840"/>
  <path d="M1282.400 483.800L1281.300 503" stroke="#1a3cff"/><path d="M1281.300 503L1280.200 523.100" stroke="#28a8ff"/>
  <path d="M1280.200 523.100L1273.700 593.800" stroke="#f04848"/>
  <path d="M1235.100 593.800H1255" stroke="#c8e048"/><path d="M1255 593.800H1273.700" stroke="#70e050"/>
  <path d="M1273.700 593.800L1289.400 601.500" stroke="#f5a030"/>
  <path d="M1273.700 593.800L1273 612" stroke="#2060ff"/><path d="M1273 612L1272.300 631.400" stroke="#30c0ff"/>
  <path d="M1273.700 593.800L1206 740" stroke="#f04848"/>
</g>
<!-- yellow translucent stripe -->
<rect x="994.700" y="606" width="9.500" height="114" fill="#f6f48c" opacity=".75"/>
<!-- conveyor back -->
<path d="M784.700 631V625L789 622.700H811L814.700 625V631Z" fill="#f4f4f4" stroke="#c8c8c8" stroke-width=".6"/>
<path d="M819.700 631.500L823 627H856L859.700 631.500Z" fill="#f4f4f4" stroke="#d0d0d0" stroke-width=".6"/>
<path d="M773 631L1014 632.700V641H773Z" fill="#fff"/>
<path d="M773 631L1014 632.700" stroke="#c9c9c9" stroke-width=".8"/>
<path d="M931.600 630.200L954 631.200" stroke="#a8e060" stroke-width="1.600"/>
<path d="M790.300 547L791.500 600" stroke="#3aa2ff" stroke-width="1" fill="none"/><path d="M791.500 600L792.700 640.500" stroke="#1030ff" stroke-width="1.100" fill="none"/>
<!-- belt -->
<path d="M746.300 671L784.700 641H791.300L756.300 671Z" fill="#a3a3a3"/>
<path d="M756.300 671L791.300 641L999.700 641.700V672Z" fill="#ffff00"/>
<path d="M792.700 640.600L775 655" stroke="#f06030" stroke-width=".9" fill="none"/><path d="M792.700 640.500H840" stroke="#60e840" stroke-width=".9" fill="none"/><path d="M840 640.600H880" stroke="#c8f020" stroke-width=".9" fill="none"/>
<path d="M999.700 641.700H1006Q1008 641.700 1008 644V672H999.700Z" fill="#aaa97c"/>
<path d="M1008 645H1014.500V671H1008Z" fill="#f6f6f6"/>
<!-- white box -->
<path d="M953 632L990 629V637.500H953Z" fill="#b5b5b5"/>
<path d="M953 637L990 637V662L953 660Z" fill="#fbfbfb"/>

<!-- ROBOT -->
<g>
  <!-- thin rod -->
  <rect x="1047.300" y="408" width="5.800" height="149" fill="#ffe896"/>
  <path d="M1047.700 408V557" stroke="#f0a200" stroke-width="1.100"/>
  <path d="M1049 556L1045 562V571L1048 573M1052 556L1055 561V569L1053 572" fill="none" stroke="#f2a400" stroke-width="2"/>
  <path d="M1047.300 406.500H1055.400V410H1047.300Z" fill="#f5a500"/>
  <path d="M1048.500 410L1052 430L1053 410Z" fill="#f5a500"/>
  <!-- left bracket -->
  <path d="M1056 399Q1058 395 1062 396L1066.500 400L1064 422L1068 432L1067 450H1060L1058 440L1055.500 420Z" fill="#f6a700"/>
  <path d="M1057.500 398L1056.500 420L1059.500 446" stroke="#ffd86a" stroke-width="1.600" fill="none"/>
  <path d="M1053.500 410L1057 440L1058 462H1055Z" fill="#f3a300"/>
  <!-- dark box -->
  <path d="M1067 404.400L1070.900 400H1087.900L1086.500 434.500H1070L1064.100 421.800Z" fill="#8f5c00"/>
  <path d="M1070.900 400H1087.900V402.500H1069Z" fill="#c98300"/>
  <path d="M1078 404V434" stroke="#7a4d00" stroke-width="3"/>
  <path d="M1095.700 400H1100L1103 404L1106.400 407.500V421L1100 416L1096 406Z" fill="#7a4d00"/>
  <ellipse cx="1085.300" cy="421" rx="1.800" ry="10" fill="#f7b21a"/>
  <!-- right cylinder top -->
  <rect x="1106.400" y="398.500" width="21.300" height="28" fill="#f7a800"/>
  <rect x="1111.700" y="398.500" width="12.600" height="28" fill="#ffe88f"/>
  <path d="M1110 399V426M1125.500 399V426" stroke="#ffd564" stroke-width="1.200"/>
  <rect x="1127.700" y="413.600" width="7.800" height="14" rx="1.500" fill="#f9aa00"/>
  <rect x="1129.500" y="414" width="3" height="12" fill="#ffc94a"/>
  <!-- flange -->
  <path d="M1086 427Q1086 424.800 1090 424.800H1138Q1141.800 424.800 1141.800 427V440Q1141.800 442.200 1138 442.200H1090Q1086 442.200 1086 440Z" fill="#fbab00"/>
  <rect x="1106.800" y="424.800" width="9" height="17.400" fill="#ffe999"/>
  <rect x="1115.800" y="424.800" width="10" height="17.400" fill="#ffcf5a"/>
  <rect x="1098" y="424.800" width="8.800" height="17.400" fill="#ffbe2e"/>
  <!-- lower cone -->
  <path d="M1095.200 442.300H1136L1134 452L1128 462.700H1103L1098 455Z" fill="#f5a400"/>
  <path d="M1106 442.300H1114L1112 462.700H1108Z" fill="#ffd15c"/>
  <path d="M1098 451.500H1134" stroke="#ffe9a6" stroke-width=".9" stroke-dasharray="1.500 2.500"/>
  <path d="M1098 455H1132" stroke="#d38a00" stroke-width=".8"/>
  <rect x="1131" y="458.800" width="8.900" height="14.600" rx="1.500" fill="#f9a900"/>
  <!-- fin -->
  <path d="M1087.900 384L1095.200 382L1096 400.500Q1097.500 409 1101 414.500Q1104 419.500 1107 422.500V440.300H1086Z" fill="#f8a800"/>
  <path d="M1087.900 384H1091.500L1092.300 412.100L1089.400 440.300H1086Z" fill="#8a5800"/>
  <path d="M1096.500 412Q1100 419 1106.500 423" stroke="#ffc440" stroke-width="1" fill="none"/>
  <!-- arm link diag (dark) -->
  <path d="M1078.700 360.200L1082.600 360.700L1081.600 383L1069 395.600L1064.100 399L1061 395.600L1062.700 384Z" fill="#7a4d00"/>
  <path d="M1078.700 360.200L1062.700 384L1061 395.600L1064.500 392L1066 385L1081 362Z" fill="#a66a00"/>
  <path d="M1061 395.600L1064.100 399L1069 395.600L1067 393L1063 392Z" fill="#f5a800"/>
  <!-- top knuckle -->
  <rect x="1081.600" y="360.200" width="16" height="23.800" rx="4.500" fill="#fbab00"/>
  <rect x="1088" y="360.700" width="8" height="22.800" rx="2" fill="#ffb81e"/>
  <path d="M1090 361V383.500M1093 361V383.500" stroke="#ffcf5c" stroke-width="1"/>
  <ellipse cx="1084.800" cy="372" rx="2.800" ry="11" fill="#ffc440"/>
  <path d="M1087.300 361.500V383" stroke="#d98e00" stroke-width=".8"/>
  <!-- small link pieces -->
  <path d="M1068 433L1078 432L1085.500 436V447L1076 449H1068Z" fill="#f7a700"/>
  <path d="M1075 436H1085V439H1075Z" fill="#ffd15c"/>
  <path d="M1085.500 442.300H1095.200V450H1088Z" fill="#f4a300"/>
  <!-- column -->
  <path d="M1057.300 429.700L1068 432V457Q1068 461.700 1073 461.700H1102V576H1061.200L1063.200 520V483L1059.300 463.700Z" fill="url(#gcol2)"/>
  <path d="M1057.300 429.700L1059.300 463.700L1063.200 483V520L1061.200 576H1063.800L1065.600 520V483L1061.700 463.700L1059.700 430.200Z" fill="#ee9f00"/>
  <!-- right cylinder -->
  <path d="M1102 489H1137.600V563Q1137.600 567.400 1133 567.400H1106Q1102 567.400 1102 563Z" fill="url(#gcyl)"/>
  <path d="M1115 567H1123V581Q1123 583.400 1120.500 583.400H1115Z" fill="#ffc84a"/>
  <path d="M1104 572Q1104 570 1106 570H1114V589L1104 587Z" fill="#f5a500"/>
  <!-- block below -->
  <rect x="1069.400" y="576" width="30" height="23" fill="#f8a900"/>
  <rect x="1069.400" y="590" width="30" height="9" fill="#e89a00"/>
  <path d="M1056 578L1062 572V582L1068 592H1058Z" fill="#f6a700"/>
  <!-- yoke legs -->
  <path d="M1046 628H1058L1057.700 660H1043Z" fill="#f3a300"/>
  <path d="M1100.400 628H1109L1107 660H1099.500Z" fill="#f3a300"/>
  <path d="M1047 630L1044.500 658" stroke="#ffc440" stroke-width="1.500"/>
  <!-- lower center column -->
  <rect x="1073.700" y="604.200" width="17.100" height="34.200" fill="#ffc43f"/>
  <rect x="1073.700" y="604.200" width="5.500" height="34.200" fill="#f5a500"/>
  <rect x="1089.200" y="599.400" width="4.800" height="30.400" fill="#9a6200"/>
  <!-- horizontal cylinder -->
  <rect x="1007" y="595.600" width="34" height="27.800" fill="url(#ghc)"/>
  <rect x="1117" y="596.200" width="35.700" height="27.200" fill="url(#ghc)"/>
  <path d="M1009 623.400V626.500H1011.700V623.400M1145 623.400V626.500H1148V623.400" fill="none" stroke="#f2a000" stroke-width="1.200"/>
  <!-- joint discs -->
  <ellipse cx="1051" cy="610" rx="11" ry="24" fill="#f5a500"/>
  <ellipse cx="1050" cy="610" rx="8.500" ry="21" fill="url(#gring)"/>
  <ellipse cx="1052" cy="610" rx="5" ry="16" fill="none" stroke="#ffcf5a" stroke-width="1.300"/>
  <ellipse cx="1054" cy="610" rx="2.500" ry="9" fill="#ffc43f"/>
  <ellipse cx="1065.500" cy="608" rx="4" ry="19.500" fill="#f2a200"/>
  <ellipse cx="1066" cy="608" rx="2" ry="14" fill="#ffc94a"/>
  <ellipse cx="1098" cy="610" rx="4.500" ry="21" fill="#e89a00"/>
  <rect x="1098" y="588" width="12" height="45" fill="#f5a500"/>
  <ellipse cx="1110" cy="610" rx="7.500" ry="23.500" fill="url(#gring)"/>
  <ellipse cx="1104" cy="610" rx="3" ry="20" fill="#ffc43f"/>
  <path d="M1113 590Q1116 610 1113 631" stroke="#d18a00" stroke-width="1" fill="none"/>
  <!-- lower body -->
  <rect x="1057.700" y="636.800" width="43.800" height="11.700" fill="#ffb10f"/>
  <rect x="1057.700" y="648.500" width="43.800" height="14.500" fill="#f4a400"/>
  <path d="M1059.500 649V663M1068 649V663M1077.500 649V663M1087 649V663M1096.500 649V663" stroke="#c98300" stroke-width="1.300"/>
  <!-- base ring -->
  <ellipse cx="1073.600" cy="663.500" rx="36.800" ry="9" fill="#f7a900"/>
  <ellipse cx="1073.600" cy="660.500" rx="32" ry="6" fill="#f3a300"/>
  <path d="M1043 655H1107.500V661H1043Z" fill="#f3a300"/>
  <rect x="1057.700" y="648.500" width="43.800" height="13" fill="#f4a400"/>
  <path d="M1059.500 649V661.500M1068 649V661.500M1077.500 649V661.500M1087 649V661.500M1096.500 649V661.500" stroke="#c98300" stroke-width="1.300"/>
  <path d="M1040 668Q1073 680 1108 668" fill="none" stroke="#c98300" stroke-width="1.200" stroke-dasharray="2.500 2"/>
</g>
<!-- gray rock base -->
<polygon points="1025.1,696.5 1028.6,691.1 1033.3,705.0 1053.5,709.7 1098.5,709.7 1114.1,706.6 1117.2,700.4 1126.9,725.2 1106.3,724.5 1053.5,721.3 1047.3,725.2 1027.9,722.1" fill="#c6c6c6" opacity=".9"/>
<polygon points="1033.3,706.6 1053.5,711.3 1098.5,711.3 1106.3,724.5 1053.5,721.3 1047.3,725.2 1030.2,722.1" fill="#d9d9d9" opacity=".8"/>
<polygon points="1036.4,691.1 1066.7,693.4 1097.8,689.5 1114.8,690.3 1114.1,706.6 1098.5,709.7 1053.5,709.7 1033.3,705.0" fill="#a3a3a3"/>
<polygon points="1069.0,694.9 1095.4,691.8 1098.5,709.7 1076.8,710.5" fill="#c4c4c4"/>
<polygon points="1036.4,691.1 1053.5,709.7 1033.3,705.0" fill="#b2b2b2"/>
<polygon points="1097.8,689.5 1114.8,690.3 1114.1,706.6 1098.5,709.7" fill="#8a8a8a"/>
<polygon points="1031.0,675.5 1047.3,672.8 1097.8,672.8 1111.7,675.9 1114.8,690.3 1097.8,689.5 1066.7,693.4 1036.4,691.1 1033.3,703.5 1030.2,694.2" fill="#6a6a6a"/>
<polygon points="1047.3,672.8 1097.8,672.8 1099.3,687.2 1066.7,693.4 1053.5,684.9" fill="#868686"/>
<polygon points="1047.3,672.8 1064.4,685.6 1053.5,684.9" fill="#7a7a7a"/>
<polygon points="1031.0,675.5 1047.3,672.8 1053.5,684.9 1036.4,691.1 1033.3,703.5 1030.2,694.2" fill="#565656"/>
<polygon points="1097.8,672.8 1111.7,675.9 1114.8,690.3 1099.3,687.2" fill="#5e5e5e"/>
<path d="M1030.200 720.500V733.500M1023.500 726.800H1037" stroke="#f07070" stroke-width=".8"/>
<!-- axis black line front of rock -->
<path d="M1076.700 710.900L1125.500 884" stroke="#111" stroke-width="1"/>

<!-- gripper -->
<path d="M1100.500 463.600H1131V474H1100.500Z" fill="#fdfdfd"/>
<path d="M1100.500 463.600H1106V474H1100.500Z" fill="#b9b9b9"/>
<path d="M1080.800 473.800H1090V478H1080.800Z" fill="#9a9a9a"/>
<path d="M1088 474.500H1152V479H1088Z" fill="#f2f2f2"/>
<path d="M1085 479H1148V488.300H1085Z" fill="#f7f7f7"/>
<path d="M1087 480V488M1089 480V488M1091 480V488M1099 481V488M1101 481V488M1108 481V488M1110 481V488M1118 481V488M1120 481V488M1128 481V488M1130 481V488M1138 481V488M1140 481V488M1146 481V488" stroke="#c4c4c4" stroke-width=".8"/>
<!-- lines in front of robot -->
<path d="M966.700 474.600L1082.700 476.100M966.700 474.600L1110 490.800" stroke="#f06060" stroke-width="1" fill="none"/>
<path d="M1113.300 491H1150" stroke="#78e858" stroke-width="1.400"/><path d="M1150 491H1214" stroke="#b8ec60" stroke-width="1.400"/>
<path d="M1114 491L1113.200 540" stroke="#1a50ff" stroke-width="1"/><path d="M1113.200 540L1112.200 588.800" stroke="#20b0f0" stroke-width="1"/>

<!-- conveyor front -->
<path d="M715.700 670L1015.500 670.500V714.400L716.300 712.700Z" fill="#fff"/>
<path d="M715.700 670L1015.500 670.500V673L715.700 672.500Z" fill="#bdbdbd"/>
<path d="M716.300 712.700L1015.500 714.400" stroke="#e6e6e6" stroke-width=".8"/>
<path d="M715.700 670V712.700" stroke="#d8d8d8" stroke-width=".8"/>
<path d="M729 688L735 683L741 688V699L735 704L729 699Z" fill="none" stroke="#cfcfcf" stroke-width=".8"/>
<circle cx="734.500" cy="693.500" r="4.500" fill="none" stroke="#cfcfcf" stroke-width=".8"/><circle cx="734.500" cy="693.500" r="2" fill="none" stroke="#d5d5d5" stroke-width=".8"/>
<!-- legs -->
<path d="M792.300 713.300H800L801 795V806H796L795 795Z" fill="#fff"/>
<path d="M800 713.300H803L804.700 793L801 795Z" fill="#c4c4c4"/>
<path d="M756.300 823.300L801.300 766.700V778.300L758 840Z" fill="#e0e0e0"/>
<path d="M756.300 823.300L801.300 766.700L803 768L757 826Z" fill="#fff"/>
<path d="M781.300 795H983.500V806H781.300Z" fill="#fff"/>
<path d="M781.300 795H983.500V799H781.300Z" fill="#dedede"/>
<path d="M739.700 713.300H750.300L756.300 884H748Z" fill="#fff"/>
<path d="M750.300 713.300H753L759.700 884H756.300Z" fill="#c6c6c6"/>
<path d="M983.700 714H992.300V884H983.700Z" fill="#fff"/>
<path d="M992.300 714H993.600V884H992.300Z" fill="#c4c4c4"/>

<!-- PALLET -->
<path d="M1198 767.600L1208.500 749.400H1348L1437.700 823.600H1243.700Z" fill="#b9badf"/>
<path d="M1198 767.600L1243.700 823.600V845.700L1232 832L1206 790Z" fill="#9b9cc4"/>
<path d="M1243.700 823.600H1437.700V832H1243.700Z" fill="#cfd0f4"/>
<path d="M1243.700 832H1265.800V845.700H1243.700ZM1328 832H1350V845.700H1328ZM1414 832H1436.500V845.700H1414Z" fill="#d0d0f6"/>
<path d="M1316 832H1328V845.700ZM1400 832H1414V845.700Z" fill="#a3a4cc"/>
<path d="M1266 825H1272V828H1266ZM1294 825H1300V828H1294ZM1323 825H1329V828H1323ZM1351 825H1357V828H1351ZM1380 825H1386V828H1380ZM1408 825H1414V828H1408Z" fill="#a6a7cc"/>
<path d="M1230 749.400L1272 823.600M1252 749.400L1301 823.600M1274 749.400L1330 823.600M1296 749.400L1358 823.600M1318 749.400L1387 823.600" stroke="#b0b1d8" stroke-width=".8" stroke-dasharray="6 5"/>
<path d="M1236 750.300H1275" stroke="#d8e878" stroke-width="1.400" opacity=".8"/>
<!-- gizmo -->
<path d="M1178.600 766.800L1194 752V782Z" fill="#fff" opacity=".45"/>
<path d="M1198 736L1206 740V770L1198 766Z" fill="#59e659" opacity=".85"/>
<path d="M1211 772H1237L1245 784.500H1217.600Z" fill="#5a5cec"/>
<path d="M1206.900 754H1228V759.500H1206.900Z" fill="#fff"/>
<path d="M1207.700 730.600H1233.800L1228 743.400L1206.900 740.300Z" fill="#e26464" opacity=".92"/>
<path d="M1206.900 740.300L1228 743.400V755.200L1206.900 754.400Z" fill="#ff8585" opacity=".95"/>
<path d="M1228 743.400L1233.800 730.600V755.200H1228Z" fill="#f07474" opacity=".85"/>
<path d="M1194 767L1218 806" stroke="#f00" stroke-width="2.400"/>
<path d="M1194 767.200H1279" stroke="#0f0" stroke-width="2.400"/>
<path d="M1278 760L1295 767.200L1278 774.500Z" fill="#0f0"/>
<path d="M1194.300 768L1196.800 685" stroke="#00f" stroke-width="2.400"/>
<path d="M1190 687L1197 669.500L1204 687Z" fill="#00f"/>
<ellipse cx="1219.500" cy="807.500" rx="7.500" ry="8" fill="#f00"/>
<circle cx="1174.700" cy="735" r="6" fill="#f00"/>
<path d="M1095 766.500L1110 758.500V775Z" fill="#0d0"/>
<path d="M1184.500 845Q1191 841 1198 845L1191.500 861Z" fill="#00f"/>
<!-- nav gizmo -->
<circle cx="1499" cy="804" r="8" fill="#d6e87c"/>
<circle cx="1539" cy="797.500" r="8" fill="#f6c3cf"/>
<circle cx="1539" cy="843" r="8" fill="#b1d9f6"/>
<path d="M1538.700 774V806" stroke="#5ab4f0" stroke-width="2"/>
<path d="M1545 804H1570" stroke="#c4e000" stroke-width="2"/>
<circle cx="1538.700" cy="764.500" r="10" fill="#70c4fb"/>
<circle cx="1538.700" cy="808.500" r="10" fill="#f8809a"/>
<circle cx="1579" cy="804" r="10" fill="#b8dc00"/>
<g font-family="'Liberation Sans',sans-serif" font-size="15" text-anchor="middle" fill="#3b4a55">
<text x="1538.700" y="770">Z</text><text x="1538.700" y="814">X</text><text x="1579" y="809.500">Y</text>
</g>
<!-- viewport toolbar -->
<path d="M500.700 296.500L508 289.400H523.300V303.500L515.500 310.600H500.700Z" fill="#c7cbf6"/>
<rect x="500.700" y="296.500" width="14.500" height="14.100" fill="#e8c98f"/>
<path d="M550.400 296.500L558 289.400H573.500V303.500L565.500 310.600H550.400Z" fill="#e8c98f"/>
<path d="M550.400 296.500H565.500V310.600M565.500 296.500L573.500 289.400" fill="none" stroke="#f3dfb8" stroke-width=".8"/>
<g stroke="#c7cbf6" stroke-width=".8" fill="none" opacity=".5">
<path d="M622.3 291.4V308.6"/>
<path d="M630.9 291.4V308.6"/>
<path d="M639.5 291.4V308.6"/>
<path d="M622.3 291.4H639.5M622.3 308.6H639.5"/>
</g>
<circle cx="622.3" cy="291.4" r="2.200" fill="#dfebf1" stroke="#c7cbf6" stroke-width=".9"/>
<circle cx="630.9" cy="291.4" r="2.200" fill="#dfebf1" stroke="#c7cbf6" stroke-width=".9"/>
<circle cx="639.5" cy="291.4" r="2.200" fill="#dfebf1" stroke="#c7cbf6" stroke-width=".9"/>
<circle cx="622.3" cy="300.0" r="2.200" fill="#dfebf1" stroke="#c7cbf6" stroke-width=".9"/>
<circle cx="630.9" cy="300.0" r="2.450" fill="#ee9797"/>
<circle cx="639.5" cy="300.0" r="2.200" fill="#dfebf1" stroke="#c7cbf6" stroke-width=".9"/>
<circle cx="622.3" cy="308.6" r="2.200" fill="#dfebf1" stroke="#c7cbf6" stroke-width=".9"/>
<circle cx="630.9" cy="308.6" r="2.200" fill="#dfebf1" stroke="#c7cbf6" stroke-width=".9"/>
<circle cx="639.5" cy="308.6" r="2.200" fill="#dfebf1" stroke="#c7cbf6" stroke-width=".9"/>
<g stroke="#c7cbf6" stroke-width=".8" fill="none" opacity=".5">
<path d="M672.4 291.4V308.6"/>
<path d="M681.0 291.4V308.6"/>
<path d="M689.6 291.4V308.6"/>
<path d="M672.4 291.4H689.6M672.4 308.6H689.6"/>
</g>
<circle cx="672.4" cy="291.4" r="2.450" fill="#ee9797"/>
<circle cx="681.0" cy="291.4" r="2.200" fill="#dfebf1" stroke="#c7cbf6" stroke-width=".9"/>
<circle cx="689.6" cy="291.4" r="2.450" fill="#ee9797"/>
<circle cx="672.4" cy="300.0" r="2.200" fill="#dfebf1" stroke="#c7cbf6" stroke-width=".9"/>
<circle cx="681.0" cy="300.0" r="2.200" fill="#dfebf1" stroke="#c7cbf6" stroke-width=".9"/>
<circle cx="689.6" cy="300.0" r="2.200" fill="#dfebf1" stroke="#c7cbf6" stroke-width=".9"/>
<circle cx="672.4" cy="308.6" r="2.450" fill="#ee9797"/>
<circle cx="681.0" cy="308.6" r="2.200" fill="#dfebf1" stroke="#c7cbf6" stroke-width=".9"/>
<circle cx="689.6" cy="308.6" r="2.450" fill="#ee9797"/>
<g stroke="#c7cbf6" stroke-width=".8" fill="none" opacity=".5">
<path d="M722.4 291.4V308.6"/>
<path d="M731.0 291.4V308.6"/>
<path d="M739.6 291.4V308.6"/>
<path d="M722.4 291.4H739.6M722.4 308.6H739.6"/>
</g>
<circle cx="722.4" cy="291.4" r="2.200" fill="#dfebf1" stroke="#c7cbf6" stroke-width=".9"/>
<circle cx="731.0" cy="291.4" r="2.450" fill="#ee9797"/>
<circle cx="739.6" cy="291.4" r="2.200" fill="#dfebf1" stroke="#c7cbf6" stroke-width=".9"/>
<circle cx="722.4" cy="300.0" r="2.450" fill="#ee9797"/>
<circle cx="731.0" cy="300.0" r="2.200" fill="#dfebf1" stroke="#c7cbf6" stroke-width=".9"/>
<circle cx="739.6" cy="300.0" r="2.450" fill="#ee9797"/>
<circle cx="722.4" cy="308.6" r="2.200" fill="#dfebf1" stroke="#c7cbf6" stroke-width=".9"/>
<circle cx="731.0" cy="308.6" r="2.450" fill="#ee9797"/>
<circle cx="739.6" cy="308.6" r="2.200" fill="#dfebf1" stroke="#c7cbf6" stroke-width=".9"/>
<g stroke="#c7cbf6" stroke-width=".8" fill="none" opacity=".5">
<path d="M772.4 291.4V308.6"/>
<path d="M781.0 291.4V308.6"/>
<path d="M789.6 291.4V308.6"/>
<path d="M772.4 291.4H789.6M772.4 308.6H789.6"/>
</g>
<circle cx="772.4" cy="291.4" r="2.450" fill="#ee9797"/>
<circle cx="781.0" cy="291.4" r="2.200" fill="#dfebf1" stroke="#c7cbf6" stroke-width=".9"/>
<circle cx="789.6" cy="291.4" r="2.200" fill="#dfebf1" stroke="#c7cbf6" stroke-width=".9"/>
<circle cx="772.4" cy="300.0" r="2.450" fill="#ee9797"/>
<circle cx="781.0" cy="300.0" r="2.200" fill="#dfebf1" stroke="#c7cbf6" stroke-width=".9"/>
<circle cx="789.6" cy="300.0" r="2.200" fill="#dfebf1" stroke="#c7cbf6" stroke-width=".9"/>
<circle cx="772.4" cy="308.6" r="2.450" fill="#ee9797"/>
<circle cx="781.0" cy="308.6" r="2.200" fill="#dfebf1" stroke="#c7cbf6" stroke-width=".9"/>
<circle cx="789.6" cy="308.6" r="2.200" fill="#dfebf1" stroke="#c7cbf6" stroke-width=".9"/>
<g stroke="#c7cbf6" stroke-width=".8" fill="none" opacity=".5">
<path d="M822.3 291.4V308.6"/>
<path d="M830.9 291.4V308.6"/>
<path d="M839.5 291.4V308.6"/>
<path d="M822.3 291.4H839.5M822.3 308.6H839.5"/>
</g>
<path d="M822.300 291.400V308.600H839.500" stroke="#f0b0b0" stroke-width=".9" fill="none" opacity=".8"/>
<circle cx="822.3" cy="291.4" r="2.200" fill="#dfebf1" stroke="#c7cbf6" stroke-width=".9"/>
<circle cx="830.9" cy="291.4" r="2.200" fill="#dfebf1" stroke="#c7cbf6" stroke-width=".9"/>
<circle cx="839.5" cy="291.4" r="2.200" fill="#dfebf1" stroke="#c7cbf6" stroke-width=".9"/>
<circle cx="822.3" cy="300.0" r="2.200" fill="#dfebf1" stroke="#c7cbf6" stroke-width=".9"/>
<circle cx="830.9" cy="300.0" r="2.200" fill="#dfebf1" stroke="#c7cbf6" stroke-width=".9"/>
<circle cx="839.5" cy="300.0" r="2.200" fill="#dfebf1" stroke="#c7cbf6" stroke-width=".9"/>
<circle cx="822.3" cy="308.6" r="2.450" fill="#ee9797"/>
<circle cx="830.9" cy="308.6" r="2.200" fill="#dfebf1" stroke="#c7cbf6" stroke-width=".9"/>
<circle cx="839.5" cy="308.6" r="2.200" fill="#dfebf1" stroke="#c7cbf6" stroke-width=".9"/>
<path d="M889 292H909.700M889 308H909.700M891.700 289.400V310.600M907 289.400V310.600" stroke="#a0a6f6" stroke-width="1.800" fill="none"/>
<circle cx="945.500" cy="296.500" r="7.800" fill="none" stroke="#a9b0c0" stroke-width=".8"/>
<circle cx="945" cy="296" r="2" fill="#a0a6f6"/>
<circle cx="950.500" cy="302.500" r="5" fill="#a0a6f6"/>
<path d="M953.500 305.500L959 310.500" stroke="#a0a6f6" stroke-width="1.500"/>
<rect x="988.1" y="294.4" width="16.6" height="16.6" fill="#a0a6f6"/>
<g fill="none" stroke="#8c8c8c" stroke-width="1.350" stroke-linejoin="round">
<rect x="992.9" y="289.4" width="16.6" height="16.6"/>
<rect x="988.1" y="294.4" width="16.6" height="16.6" fill="#a0a6f6"/>
<path d="M988.1 294.4L992.9 289.4M1004.7 294.4L1009.5 289.4M988.1 311.0L992.9 306.0M1004.7 311.0L1009.5 306.0"/>
</g>
<rect x="1043.1" y="289.4" width="16.6" height="16.6" fill="#a0a6f6"/>
<g fill="none" stroke="#8c8c8c" stroke-width="1.350" stroke-linejoin="round">
<rect x="1043.1" y="289.4" width="16.6" height="16.6"/>
<rect x="1038.3" y="294.4" width="16.6" height="16.6"/>
<path d="M1038.3 294.4L1043.1 289.4M1054.9 294.4L1059.7 289.4M1038.3 311.0L1043.1 306.0M1054.9 311.0L1059.7 306.0"/>
</g>
<path d="M1093.1 294.4L1088.3 289.4V306.0L1093.1 311.0Z" fill="#a0a6f6"/>
<g fill="none" stroke="#8c8c8c" stroke-width="1.350" stroke-linejoin="round">
<rect x="1088.3" y="289.4" width="16.6" height="16.6"/>
<rect x="1093.1" y="294.4" width="16.6" height="16.6"/>
<path d="M1093.1 294.4L1088.3 289.4M1109.7 294.4L1104.9 289.4M1093.1 311.0L1088.3 306.0M1109.7 311.0L1104.9 306.0"/>
</g>
<path d="M1154.9 294.4L1159.7 289.4V306.0L1154.9 311.0Z" fill="#a0a6f6"/>
<g fill="none" stroke="#8c8c8c" stroke-width="1.350" stroke-linejoin="round">
<rect x="1143.1" y="289.4" width="16.6" height="16.6"/>
<rect x="1138.3" y="294.4" width="16.6" height="16.6"/>
<path d="M1138.3 294.4L1143.1 289.4M1154.9 294.4L1159.7 289.4M1138.3 311.0L1143.1 306.0M1154.9 311.0L1159.7 306.0"/>
</g>
<path d="M1188.3 294.4L1193.1 289.4H1209.7L1204.9 294.4Z" fill="#a0a6f6"/>
<g fill="none" stroke="#8c8c8c" stroke-width="1.350" stroke-linejoin="round">
<rect x="1193.1" y="289.4" width="16.6" height="16.6"/>
<rect x="1188.3" y="294.4" width="16.6" height="16.6"/>
<path d="M1188.3 294.4L1193.1 289.4M1204.9 294.4L1209.7 289.4M1188.3 311.0L1193.1 306.0M1204.9 311.0L1209.7 306.0"/>
</g>
<path d="M1238.3 311.0L1243.1 306.0H1259.7L1254.9 311.0Z" fill="#a0a6f6"/>
<g fill="none" stroke="#8c8c8c" stroke-width="1.350" stroke-linejoin="round">
<rect x="1243.1" y="289.4" width="16.6" height="16.6"/>
<rect x="1238.3" y="294.4" width="16.6" height="16.6"/>
<path d="M1238.3 294.4L1243.1 289.4M1254.9 294.4L1259.7 289.4M1238.3 311.0L1243.1 306.0M1254.9 311.0L1259.7 306.0"/>
</g>
<circle cx="1311.400" cy="305.500" r="4.700" fill="#c7cbf6"/><circle cx="1327" cy="291" r="2.100" fill="#c7cbf6"/>
<path d="M1315 301.700L1325 292.500M1315 298.800V301.700H1318M1322 292.500H1325V295.500" stroke="#e8c98f" stroke-width="1" fill="none"/>
<path d="M1362 305.300A5.400 7.300 0 0 1 1372.600 305.300Z" fill="#e8c98f"/>
<path d="M1358.500 305.300L1370.500 290.400" stroke="#c7cbf6" stroke-width="2.600" stroke-linecap="round" fill="none"/><path d="M1357 306.600H1379.200" stroke="#c7cbf6" stroke-width="2.600" fill="none"/>
<circle cx="1417.900" cy="299.300" r="9.400" fill="#c7cbf6"/><path d="M1408.300 309.700H1427.800M1408.800 308.300V311M1427.300 308.300V311" stroke="#ecd3a6" stroke-width="1.600" fill="none"/>
<path d="M1462.200 306.600L1474.700 294.100L1478.900 298.800L1466.400 310.700Z" fill="#c7cbf6"/>
<path d="M1464.500 307.500L1466.500 309.500M1466.500 305.500L1468.500 307.500M1468.500 303.500L1470.500 305.500M1470.500 301.500L1472.500 303.500M1472.500 299.500L1474.500 301.500M1474.500 297.500L1476.500 299.500" stroke="#dfebf1" stroke-width=".8"/>
<path d="M1458 302.400L1471 290.400M1456.800 300.800L1459.500 303.800M1469.800 288.800L1472.500 291.800" stroke="#e8c98f" stroke-width="1.500" fill="none"/>

</svg>
<!--VTOOLBAR-->
</div>
<!-- RIGHT PANEL -->
<svg style="left:1840px;top:197px" width="17" height="17" viewBox="0 0 17 17"><rect x=".8" y=".8" width="15" height="15" rx="1.500" fill="none" stroke="#444" stroke-width="1.300"/><path d="M8.300 .8V15.800" stroke="#444" stroke-width="1.300"/></svg>
<svg style="left:1880px;top:204px" width="16" height="4" viewBox="0 0 16 4"><circle cx="1.500" cy="2" r="1.100" fill="#444"/><circle cx="7.500" cy="2" r="1.100" fill="#444"/><circle cx="13.500" cy="2" r="1.100" fill="#444"/></svg>
<div class="abs" style="left:1620px;top:231px;width:300px;height:653px;background:#fff"></div>
<style>
.rp{position:absolute;white-space:nowrap;line-height:18px;font-size:15px}
.hr{position:absolute;left:1620px;width:300px;height:1px;background:#ebeef5}
.btn{position:absolute;height:24px;border:1px solid #dcdfe6;border-radius:4px;background:#fff;color:#606266;font-size:15px;line-height:22px;text-align:center;white-space:nowrap}
.pbtn{position:absolute;height:24px;border-radius:3px;background:#409eff;color:#fff;font-size:15px;line-height:24px;text-align:center;white-space:nowrap}
</style>
<svg style="left:1635px;top:244px" width="8" height="12" viewBox="0 0 8 12"><path d="M6.500 1L1.500 6L6.500 11" fill="none" stroke="#333" stroke-width="1.300"/></svg>
<span class="rp" style="left:1648px;top:241px;font-weight:bold;color:#222;font-size:14.800px">设置垛型</span>
<svg style="left:1895px;top:245px" width="11" height="11" viewBox="0 0 11 11"><path d="M1 1L10 10M10 1L1 10" stroke="#111" stroke-width="2" fill="none"/></svg>
<div class="hr" style="top:270px"></div>
<span class="rp" style="left:1632px;top:288px;color:#999">垛型名称：</span>
<span class="rp" style="left:1708px;top:288px;color:#333">Stack_9U9H</span>
<svg style="left:1808px;top:288px" width="15" height="15" viewBox="0 0 15 15"><path d="M1 14H12" stroke="#555" stroke-width="1.100"/><path d="M3.500 11.500L4.300 8.500L11 1.800Q11.800 1 12.600 1.800Q13.400 2.600 12.600 3.400L5.900 10.100Z" fill="none" stroke="#555" stroke-width="1.100" stroke-linejoin="round"/></svg>
<div class="hr" style="top:321px"></div>
<span class="rp" style="left:1632px;top:339px;color:#999">关联工件：</span>
<div class="abs" style="left:1708px;top:336px;width:200px;height:24px;border:1px solid #dcdfe6;border-radius:4px;background:#fff"></div>
<span class="rp" style="left:1716px;top:339px;color:#555">梯形砖_1</span>
<svg style="left:1883px;top:343px" width="14" height="9" viewBox="0 0 14 9"><path d="M1 1L7 7.500L13 1" fill="none" stroke="#aaa" stroke-width="1.100"/></svg>
<div class="hr" style="top:373px"></div>
<span class="rp" style="left:1632px;top:390px;color:#999">设置抓取点（梯形砖_1）<span style="margin-left:3px">：</span></span>
<div class="pbtn" style="left:1845px;top:386px;width:63px;height:25px;line-height:25px">设置</div>
<div class="abs" style="left:1826px;top:379px;width:93px;height:44px;border:2px solid #f5222d;border-radius:3px"></div>
<div class="hr" style="top:424px"></div>
<span class="rp" style="left:1632px;top:433px;color:#999">垛型设置</span>
<span class="rp" style="left:1638px;top:466px;color:#555;word-spacing:2px">第 1 层</span>
<div class="btn" style="left:1634px;top:488px;width:84px">编辑</div>
<div class="btn" style="left:1729px;top:488px;width:84px">复制</div>
<div class="btn" style="left:1824px;top:488px;width:84px"><svg style="left:16px;top:4px" width="14" height="15" viewBox="0 0 14 15"><g fill="none" stroke="#606266" stroke-width="1.100"><path d="M1 3.500H13M4.500 3.500V1.500H9.500V3.500M2.500 3.500V13.500H11.500V3.500M5.500 6.500V10.500M8.500 6.500V10.500"/></g></svg><span style="margin-left:20px">删除</span></div>
<div class="hr" style="top:832px"></div>
<div class="pbtn" style="left:1633px;top:847px;width:122px;height:25px;line-height:25px">智能生成垛层</div>
<div class="pbtn" style="left:1785px;top:847px;width:123px;height:25px;line-height:25px">自主设置垛层</div>
<!-- BOTTOM PANEL -->
<div class="abs" style="left:60px;top:884px;width:1860px;height:119px;background:#fff;border-top:1px solid #d8d8d8"></div>
<div class="abs" style="left:60px;top:928px;width:1860px;height:5px;background:linear-gradient(rgba(0,0,0,.07),rgba(0,0,0,0))"></div>
<style>.pt{position:absolute;top:898px;font-size:14px;color:#7a7a7a;white-space:nowrap;line-height:18px}
.log{position:absolute;left:85px;font-family:"Liberation Mono","Noto Sans Mono CJK SC","Noto Sans CJK SC",monospace;font-size:16px;color:#222;white-space:pre;line-height:20px}</style>
<span class="pt" style="left:85px">问题</span>
<span class="pt" style="left:137px;color:#333">输出</span>
<div class="abs" style="left:137px;top:922.500px;width:28px;height:1px;background:#333"></div>
<span class="pt" style="left:190px">终端</span>
<span class="pt" style="left:242px">调试控制台</span>
<div class="abs" style="left:60px;top:928px;width:1843px;height:8px;overflow:hidden"><span class="log" style="left:25px;top:-14px">2023-05-05 14:46:56.690 [info] </span></div>
<span class="log" style="top:933px">2023-05-05 14:46:56.694 [info] init</span>
<span class="log" style="top:957px">2023-05-05 14:46:56.695 [info] <span style="font-size:17.700px;line-height:20px">控制器连接通信成功</span>!</span>
<div class="abs" style="left:1485px;top:892px;width:213px;height:30px;border:1px solid #cecece;border-radius:3px;background:#fff"></div>
<span class="t" style="left:1497px;top:900px;font-size:16.500px;color:#3c3c3c">Devicemanager</span>
<svg style="left:1675px;top:900px" width="13" height="8" viewBox="0 0 13 8"><path d="M1 1L6.500 6.500L12 1" fill="none" stroke="#444" stroke-width="1.300"/></svg>
<!-- panel icons -->
<svg style="left:1718px;top:897px" width="18" height="14" viewBox="0 0 18 14"><path d="M0 1H17.500M0 5.500H17.500M0 10H10" stroke="#555" stroke-width="1.200"/><path d="M12 8.500L16.500 13M16.500 8.500L12 13" stroke="#555" stroke-width="1.200"/></svg>
<svg style="left:1760px;top:895px" width="15" height="17" viewBox="0 0 15 17"><rect x=".8" y="7.500" width="13.400" height="8.500" rx="1.500" fill="none" stroke="#555" stroke-width="1.300"/><path d="M3.500 7.500V4.500A3.600 3.600 0 0 1 10.500 3.200" fill="none" stroke="#555" stroke-width="1.300"/></svg>
<svg style="left:1798px;top:895px" width="20" height="17" viewBox="0 0 20 17" opacity=".3"><path d="M6.500 3.500H13L18 8V16H6.500Z" fill="none" stroke="#888" stroke-width="1.200"/><path d="M13 3.500V8H18" fill="none" stroke="#888" stroke-width="1.200"/><path d="M1 7V4Q1 2 3 2H9M7 .2L9 2L7 3.800" fill="none" stroke="#888" stroke-width="1.200"/></svg>
<svg style="left:1841px;top:899px" width="13" height="8" viewBox="0 0 13 8"><path d="M1 7L6.500 1.500L12 7" fill="none" stroke="#555" stroke-width="1.300"/></svg>
<svg style="left:1881px;top:898px" width="12" height="12" viewBox="0 0 12 12"><path d="M1 1L11 11M11 1L1 11" stroke="#555" stroke-width="1.300" fill="none"/></svg>
<!-- scrollbar -->
<div class="abs" style="left:1903px;top:928px;width:1px;height:70px;background:#d9d9d9"></div>
<div class="abs" style="left:1903px;top:997px;width:17px;height:1px;background:#555"></div>
<!-- STATUS BAR -->
<div class="abs" style="left:0;top:1003px;width:1920px;height:27px;background:#007acc"></div>
<svg style="left:19.500px;top:1005.500px" width="17" height="17" viewBox="0 0 16 16"><circle cx="8" cy="8" r="7" fill="none" stroke="#fff" stroke-width="1.400"/><path d="M4.900 4.900L11.100 11.100M11.100 4.900L4.900 11.100" stroke="#fff" stroke-width="1.400"/></svg>
<span class="t" style="left:40px;top:1009px;font-size:15px;color:#fff">0</span>
<svg style="left:53px;top:1005px" width="18" height="16" viewBox="0 0 18 16"><path d="M9 1.500L16.800 14.800H1.200Z" fill="none" stroke="#fff" stroke-width="1.300" stroke-linejoin="round"/><path d="M9 6V10.500M9 11.800V13.200" stroke="#fff" stroke-width="1.300"/></svg>
<span class="t" style="left:74px;top:1009px;font-size:15px;color:#fff">0</span>
<svg style="left:106px;top:1006px" width="10" height="16" viewBox="0 0 10 16"><path d="M3 0V4M7 0V4M1 4H9V7.500Q9 11 5 11Q1 11 1 7.500ZM5 11V15.500" fill="none" stroke="#fff" stroke-width="1.700"/></svg>
<svg style="left:1884px;top:1006px" width="17" height="18" viewBox="0 0 17 18"><path d="M2 13.500H15M3.500 13.500V8A5 5 0 0 1 13.500 8V13.500M6.500 15.500A2 2 0 0 0 10.500 15.500" fill="none" stroke="#fff" stroke-width="1.400" stroke-linecap="round"/></svg>
</body>
</html>
